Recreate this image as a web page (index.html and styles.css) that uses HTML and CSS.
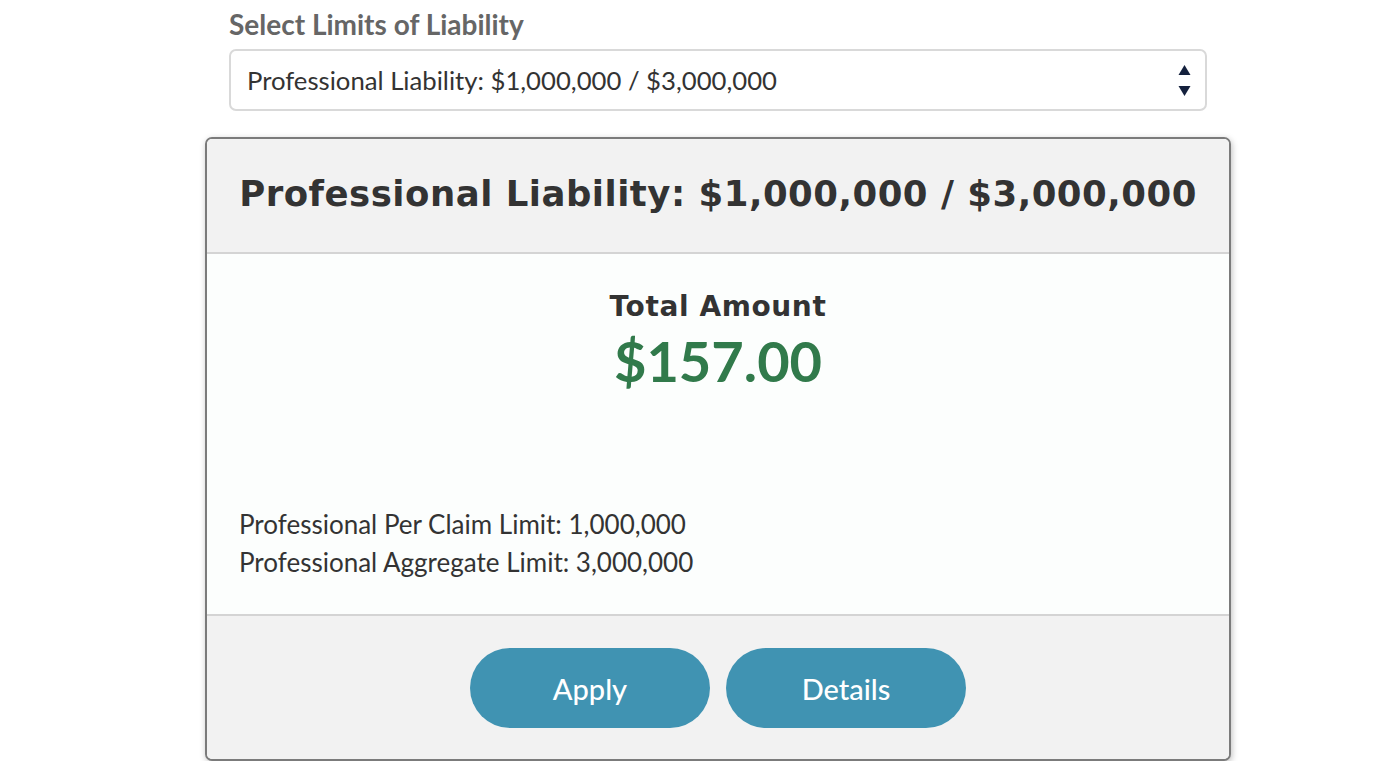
FILE: index.html
```html
<!DOCTYPE html>
<html>
<head>
<meta charset="utf-8">
<link rel="stylesheet" href="styles.css">
</head>
<body>
<div class="wrap">
  <div class="field">
    <label class="field-label" for="limits">Select Limits of Liability</label>
    <div class="select">
      <span class="select-value">Professional Liability: $1,000,000 / $3,000,000</span>
      <svg class="select-arrows" width="13" height="32" viewBox="0 0 13 32"><path d="M6.5 0 L12.5 10 L0.5 10 Z" fill="#14213d"/><path d="M0.5 21 L12.5 21 L6.5 31 Z" fill="#14213d"/></svg>
    </div>
  </div>
  <div class="card">
    <div class="card-head">
      <h2 class="card-title">Professional Liability: $1,000,000 / $3,000,000</h2>
    </div>
    <div class="card-body">
      <div class="total">
        <div class="total-label">Total Amount</div>
        <div class="total-value">$157.00</div>
      </div>
      <div class="limits">
        <div>Professional Per Claim Limit: 1,000,000</div>
        <div>Professional Aggregate Limit: 3,000,000</div>
      </div>
    </div>
    <div class="card-foot">
      <button class="btn">Apply</button>
      <button class="btn">Details</button>
    </div>
  </div>
</div>
</body>
</html>
```
FILE: styles.css
```css
* { box-sizing: border-box; }
html, body { margin: 0; padding: 0; background: #fff; }
body { font-family: Lato, "Liberation Sans", sans-serif; color: #333; }
.wrap { width: 1026px; margin-left: 205px; }
.field { padding: 0 24px; }
.field-label {
  display: block;
  font-weight: 700;
  font-size: 28px;
  color: #666;
  line-height: 32px;
  padding-top: 8px;
}
.select {
  margin-top: 9px;
  height: 62px;
  border: 2px solid #d9d9d9;
  border-radius: 7px;
  display: flex;
  align-items: center;
  justify-content: space-between;
  padding: 0 14px 0 16px;
}
.select-value { font-size: 25.7px; color: #333; }
.select-arrows { display: block; margin-top: 1px; }
.card {
  margin-top: 26px;
  border: 2px solid #7b7b7b;
  border-radius: 7px;
  overflow: hidden;
  box-shadow: 1px 2px 6px rgba(0,0,0,0.25);
  background: #fcfefd;
}
.card-head {
  background: #f2f2f2;
  height: 115px;
  border-bottom: 2px solid #d4d4d4;
  display: flex;
  align-items: center;
  justify-content: center;
}
.card-title {
  margin: 0;
  font-family: "DejaVu Sans", sans-serif;
  font-weight: 700;
  font-size: 35.5px;
  color: #333;
  letter-spacing: 0.5px;
  padding-bottom: 4px;
}
.card-body {
  height: 360px;
  padding: 36px 32px 0 32px;
  display: flex;
  flex-direction: column;
}
.total { text-align: center; }
.total-label {
  font-family: "DejaVu Sans", sans-serif;
  font-weight: 700;
  font-size: 28px;
  line-height: 34px;
  color: #333;
  letter-spacing: 0.6px;
}
.total-value {
  margin-top: 4px;
  font-weight: 700;
  font-size: 56px;
  line-height: 66px;
  color: #317a4b;
}
.limits {
  margin-top: 111px;
  font-size: 26px;
  line-height: 38px;
  color: #333;
}
.card-foot {
  background: #f2f2f2;
  border-top: 2px solid #d4d4d4;
  height: 145px;
  display: flex;
  justify-content: center;
  align-items: flex-start;
  gap: 16px;
  padding-top: 32px;
}
.btn {
  width: 240px;
  height: 80px;
  border: none;
  border-radius: 40px;
  background: #4093b2;
  color: #fff;
  font-family: Lato, "Liberation Sans", sans-serif;
  font-size: 29px;
  font-weight: 500;
  cursor: pointer;
}
```
